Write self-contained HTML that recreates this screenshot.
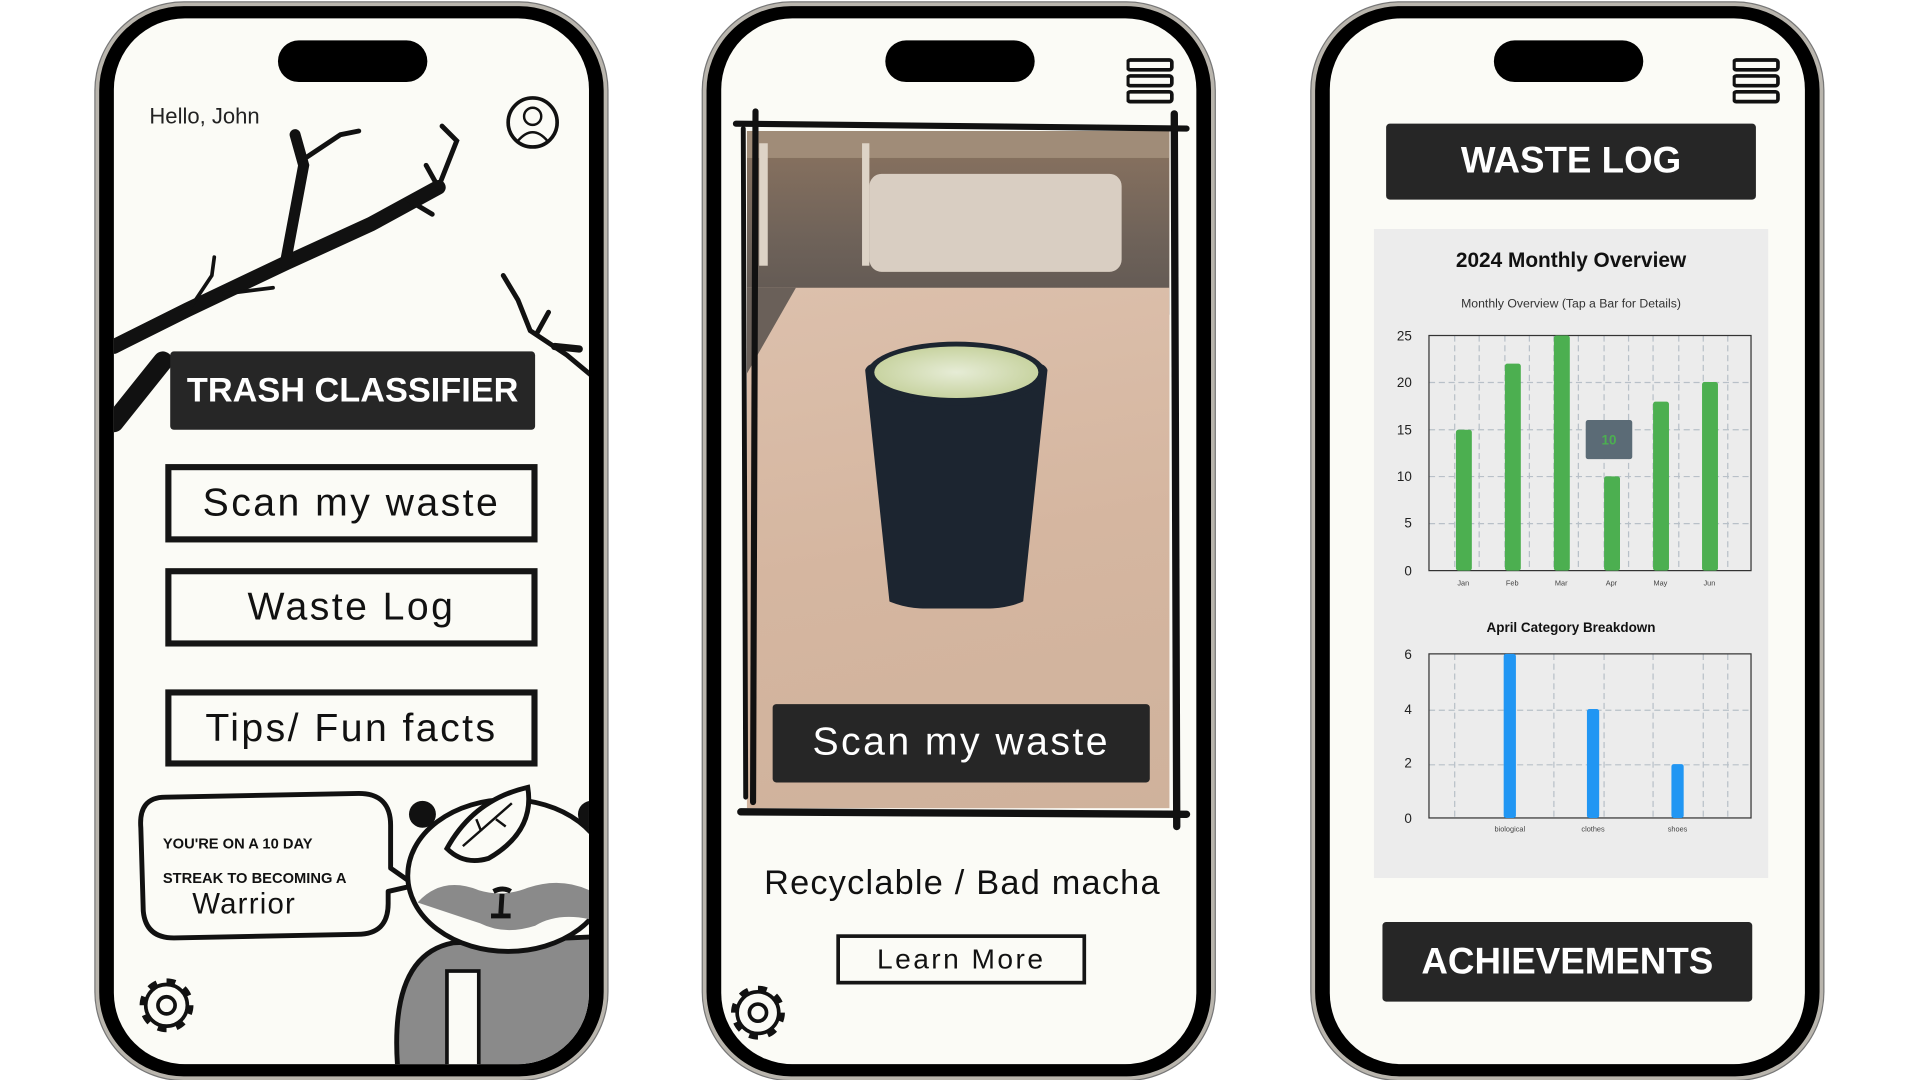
<!DOCTYPE html>
<html><head><meta charset="utf-8"><style>
*{margin:0;padding:0;box-sizing:border-box}
body{width:1920px;height:1080px;overflow:hidden;background:#fff;font-family:"Liberation Sans",sans-serif}
#w{position:absolute;left:0;top:0;width:1568px;height:882px;transform:scale(1.22449);transform-origin:0 0}
.ph{position:absolute;top:2px;width:418px;height:880px;border-radius:72px;background:#000;border:3px solid #b9b5ad;box-shadow:0 0 0 1px #777}
.sc{position:absolute;left:12px;top:10px;right:12px;bottom:10px;border-radius:58px;background:#fbfbf6;overflow:hidden}
.notch{position:absolute;left:134px;top:18px;width:122px;height:34px;border-radius:17px;background:#000;z-index:5}
.btn{position:absolute;border:5px solid #151515;background:#fbfbf6;text-align:center;font-size:32px;color:#111;letter-spacing:2px;white-space:nowrap}
.blk{position:absolute;background:#262626;color:#fff;text-align:center;border-radius:3px;white-space:nowrap}
.a{position:absolute}
</style></head><body><div id="w">

<!-- PHONE 1 -->
<div class="ph" style="left:78px">
<div class="sc">
<div class="notch"></div>
<div class="a" style="left:29px;top:70px;font-size:18px;color:#222">Hello, John</div>
<svg class="a" style="left:0;top:0" width="394" height="860" viewBox="0 0 394 860">
<circle cx="342" cy="85" r="20" fill="none" stroke="#111" stroke-width="3"/>
<circle cx="342" cy="80" r="7" fill="none" stroke="#111" stroke-width="2"/>
<path d="M330 100 q12-14 24 0" fill="none" stroke="#111" stroke-width="2"/>
<g stroke="#111" fill="none" stroke-linecap="round">
<path d="M0 268 L60 238 L140 200 L210 168 L265 138" stroke-width="12"/>
<path d="M0 330 L40 280" stroke-width="16"/>
<path d="M140 200 L155 120 L148 95" stroke-width="9"/>
<path d="M155 115 L185 95 L200 92" stroke-width="4"/>
<path d="M265 138 L255 120 M265 138 L280 100 L268 88 M240 148 L260 160" stroke-width="4"/>
<path d="M60 240 L80 210 L82 195 M90 225 L130 220" stroke-width="3"/>
<path d="M394 295 L370 275 L340 255 L330 230 L318 210 M345 258 L355 240" stroke-width="4"/>
<path d="M360 268 L380 270" stroke-width="6"/>
</g>
<path d="M42 636 q-22 0 -20 25 l2 68 q2 22 25 22 l150 -3 q25 0 25 -25 l0 -10 l22 -5 l-20 -14 l0 -35 q0 -26 -26 -26 z" fill="#fbfbf6" stroke="#111" stroke-width="4" stroke-linejoin="round"/>
<path d="M232 860 q-8 -95 45 -105 l117 -5 v110z" fill="#8a8a8a" stroke="#111" stroke-width="4"/>
<rect x="272" y="778" width="26" height="82" fill="#fbfbf6" stroke="#111" stroke-width="3"/>
<ellipse cx="322" cy="700" rx="82" ry="62" fill="#fbfbf6" stroke="#111" stroke-width="4"/>
<path d="M248 722 q20 -22 50 -10 q20 6 40 -2 q30 -10 56 5 v22 q-30 -8 -50 4 q-25 8 -45 -2 q-30 -10 -51 -17z" fill="#8a8a8a"/>
<circle cx="252" cy="650" r="11" fill="#111"/>
<circle cx="390" cy="650" r="11" fill="#111"/>
<path d="M310 713 q8 -4 14 0 M317 715 l-1 16 M308 733 h16" stroke="#111" stroke-width="4" fill="none"/>
<path d="M272 678 q22 -40 66 -50 q6 36 -32 58 q-20 6 -34 -8z" fill="#fbfbf6" stroke="#111" stroke-width="4"/>
<path d="M285 676 l40 -35 M300 664 l-4 -10 M312 654 l8 6" stroke="#111" stroke-width="2" fill="none"/>
<g transform="translate(43,806)" fill="none" stroke="#111">
<circle r="17" stroke-width="3"/>
<circle r="19" stroke-width="6" stroke-dasharray="7 7.9"/>
<circle r="7" stroke-width="3"/>
</g>
</svg>
<div class="blk" style="left:46px;top:272px;width:298px;height:64px;font-size:28px;line-height:64px;font-weight:bold">TRASH CLASSIFIER</div>
<div class="btn" style="left:42px;top:364px;width:304px;height:64px;line-height:52px">Scan my waste</div>
<div class="btn" style="left:42px;top:449px;width:304px;height:64px;line-height:52px">Waste Log</div>
<div class="btn" style="left:42px;top:548px;width:304px;height:63px;line-height:52px">Tips/ Fun facts</div>
<div class="a" style="left:40px;top:660px;font-size:12px;font-weight:bold;line-height:28px;color:#111;white-space:nowrap">YOU'RE ON A 10 DAY<br>STREAK TO BECOMING A</div>
<div class="a" style="left:64px;top:710px;font-size:24px;color:#111;letter-spacing:1px">Warrior</div>
</div></div>

<!-- PHONE 2 -->
<div class="ph" style="left:574px">
<div class="sc">
<div class="notch"></div>
<svg class="a" style="left:331px;top:32px" width="40" height="40"><g fill="none" stroke="#111" stroke-width="3"><rect x="1" y="2" width="36" height="8" rx="2"/><rect x="1" y="15" width="36" height="8" rx="2"/><rect x="1" y="28" width="36" height="8" rx="2"/></g></svg>
<div class="a" style="left:21px;top:92px;width:345px;height:553px;overflow:hidden;background:#d8b8a2">
<div class="a" style="left:0;top:0;width:345px;height:150px;background:linear-gradient(180deg,#8c7460 0%,#6e6259 60%,#5f5752 100%)"></div>
<div class="a" style="left:0;top:0;width:345px;height:22px;background:#a08c78"></div>
<div class="a" style="left:10px;top:10px;width:90px;height:100px;border-left:7px solid #ddd3c6;border-right:6px solid #ddd3c6"></div>
<div class="a" style="left:100px;top:35px;width:206px;height:80px;background:#d9cec2;border-radius:10px"></div>
<div class="a" style="left:0;top:128px;width:345px;height:425px;background:linear-gradient(170deg,#dcc0ac,#d5b6a0 50%,#cfb29c)"></div>
<div class="a" style="left:0;top:128px;width:0;height:0;border-right:40px solid transparent;border-top:70px solid #6a6059"></div>
<div class="a" style="left:96px;top:190px;width:150px;height:200px;background:#1c2530;border-radius:8px 8px 50px 50px/8px 8px 30px 30px;clip-path:polygon(0 0,100% 0,86% 100%,14% 100%)"></div>
<div class="a" style="left:98px;top:172px;width:146px;height:52px;border-radius:50%;background:#1c2530"></div>
<div class="a" style="left:104px;top:176px;width:134px;height:42px;border-radius:50%;background:radial-gradient(#e6ecd6,#c4d09a 80%)"></div>
</div>
<svg class="a" style="left:0;top:0" width="394" height="860"><g stroke="#111" stroke-linecap="round" fill="none">
<path d="M12 86 L380 90" stroke-width="5"/><path d="M28 76 L26 640" stroke-width="5"/><path d="M18 90 L20 636" stroke-width="4"/>
<path d="M370 78 L372 660" stroke-width="6"/><path d="M16 648 L380 650" stroke-width="6"/>
</g>
<g transform="translate(30,812)" fill="none" stroke="#111">
<circle r="17" stroke-width="3"/>
<circle r="19" stroke-width="6" stroke-dasharray="7 7.9"/>
<circle r="7" stroke-width="3"/>
</g></svg>
<div class="blk" style="left:42px;top:560px;width:308px;height:64px;font-size:32px;line-height:60px;letter-spacing:2px">Scan my waste</div>
<div class="a" style="left:0;width:394px;top:690px;text-align:center;font-size:28px;color:#111;letter-spacing:1px">Recyclable / Bad macha</div>
<div class="btn" style="left:94px;top:748px;width:204px;height:41px;border-width:3px;font-size:23px;line-height:34px">Learn More</div>
</div></div>

<!-- PHONE 3 -->
<div class="ph" style="left:1071px">
<div class="sc">
<div class="notch"></div>
<svg class="a" style="left:329px;top:32px" width="40" height="40"><g fill="none" stroke="#111" stroke-width="3"><rect x="1" y="2" width="36" height="8" rx="2"/><rect x="1" y="15" width="36" height="8" rx="2"/><rect x="1" y="28" width="36" height="8" rx="2"/></g></svg>
<div class="blk" style="left:46px;top:86px;width:302px;height:62px;font-size:30px;line-height:62px;font-weight:bold">WASTE LOG</div>
<div class="a" style="left:36px;top:172px;width:322px;height:530px;background:#ececec"></div>
<div class="a" style="left:36px;top:188px;width:322px;text-align:center;font-size:17px;font-weight:bold;color:#111">2024 Monthly Overview</div>
<div class="a" style="left:36px;top:228px;width:322px;text-align:center;font-size:10px;color:#333">Monthly Overview (Tap a Bar for Details)</div>
<svg class="a" style="left:0;top:0" width="394" height="860" font-family="Liberation Sans" font-size="11" fill="#222">
<g stroke="#b8c0c8" stroke-dasharray="5 3" stroke-width="1">
<path d="M81 297.4h263M81 336h263M81 374.2h263M81 412.6h263"/>
<path d="M102 259v192M122 259v192M143 259v192M163 259v192M183 259v192M203 259v192M224 259v192M244 259v192M264 259v192M285 259v192M305 259v192M325 259v192"/>
<path d="M81 565h263M81 609.6h263M102 519v134M143 519v134M183 519v134M224 519v134M264 519v134M305 519v134M325 519v134"/>
</g>
<rect x="81" y="259" width="263" height="192" fill="none" stroke="#333"/>
<rect x="81" y="519" width="263" height="134" fill="none" stroke="#333"/>
<g fill="#4caf50">
<rect x="103" y="336" width="13" height="115" rx="2"/><rect x="143" y="282" width="13" height="169" rx="2"/>
<rect x="183" y="259" width="13" height="192" rx="2"/><rect x="224" y="374" width="13" height="77" rx="2"/>
<rect x="264" y="313" width="13" height="138" rx="2"/><rect x="304" y="297" width="13" height="154" rx="2"/>
</g>
<rect x="209" y="328" width="38" height="32" rx="2" fill="#5b6b76"/>
<text x="228" y="348" fill="#4caf50" font-size="11" text-anchor="middle" font-weight="bold">10</text>
<g fill="#2196f3"><rect x="142" y="519" width="10" height="134" rx="2"/><rect x="210" y="564" width="10" height="89" rx="2"/><rect x="279" y="609" width="10" height="44" rx="2"/></g>
<g text-anchor="end"><text x="67" y="263">25</text><text x="67" y="301">20</text><text x="67" y="340">15</text><text x="67" y="378">10</text><text x="67" y="416">5</text><text x="67" y="455">0</text>
<text x="67" y="523">6</text><text x="67" y="568">4</text><text x="67" y="612">2</text><text x="67" y="657">0</text></g>
<g font-size="6" text-anchor="middle" fill="#444"><text x="109" y="463">Jan</text><text x="149" y="463">Feb</text><text x="189" y="463">Mar</text><text x="230" y="463">Apr</text><text x="270" y="463">May</text><text x="310" y="463">Jun</text>
<text x="147" y="664">biological</text><text x="215" y="664">clothes</text><text x="284" y="664">shoes</text></g>
<text x="197" y="501" font-size="11" font-weight="bold" text-anchor="middle" fill="#111">April Category Breakdown</text>
</svg>
<div class="blk" style="left:43px;top:738px;width:302px;height:65px;font-size:30px;line-height:65px;font-weight:bold">ACHIEVEMENTS</div>
</div></div>

</div></body></html>
